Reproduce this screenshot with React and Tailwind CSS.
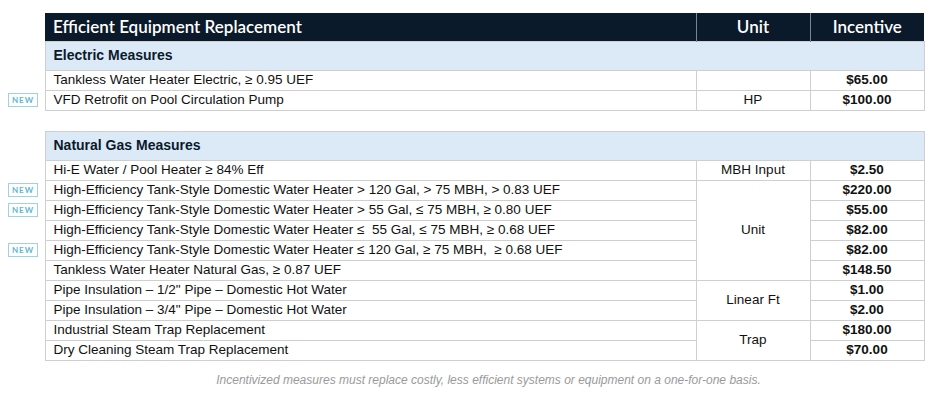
import React from "react";

const New = () => (
  <span className="block w-[30px] h-[14px] border border-[#9fd3e0] text-[#5bb8cf] text-[8px] leading-[12px] text-center tracking-[1px] font-bold" style={{ fontFamily: "Lato, sans-serif" }}>
    NEW
  </span>
);

const td = "border border-[#cfcfcf] h-[20px] px-[8px] py-0 text-[13.5px] leading-[18px] text-[#111] whitespace-pre overflow-hidden";

export default function App() {
  const electric = [
    { d: "Tankless Water Heater Electric, ≥ 0.95 UEF", u: "", i: "$65.00" },
    { d: "VFD Retrofit on Pool Circulation Pump", u: "HP", i: "$100.00", n: true },
  ];
  const gas = [
    { d: "Hi-E Water / Pool Heater ≥ 84% Eff", u: "MBH Input", span: 1, i: "$2.50" },
    { d: "High-Efficiency Tank-Style Domestic Water Heater > 120 Gal, > 75 MBH, > 0.83 UEF", u: "Unit", span: 5, i: "$220.00", n: true },
    { d: "High-Efficiency Tank-Style Domestic Water Heater > 55 Gal, ≤ 75 MBH, ≥ 0.80 UEF", i: "$55.00", n: true },
    { d: "High-Efficiency Tank-Style Domestic Water Heater ≤  55 Gal, ≤ 75 MBH, ≥ 0.68 UEF", i: "$82.00" },
    { d: "High-Efficiency Tank-Style Domestic Water Heater ≤ 120 Gal, ≥ 75 MBH,  ≥ 0.68 UEF", i: "$82.00", n: true },
    { d: "Tankless Water Heater Natural Gas, ≥ 0.87 UEF", i: "$148.50" },
    { d: "Pipe Insulation – 1/2\" Pipe – Domestic Hot Water", u: "Linear Ft", span: 2, i: "$1.00" },
    { d: "Pipe Insulation – 3/4\" Pipe – Domestic Hot Water", i: "$2.00" },
    { d: "Industrial Steam Trap Replacement", u: "Trap", span: 2, i: "$180.00" },
    { d: "Dry Cleaning Steam Trap Replacement", i: "$70.00" },
  ];

  const row = (r, k) => (
    <tr key={k} className="h-[20px]">
      <td className="w-[45px] p-0 pl-[8px] h-[20px] leading-none align-middle">{r.n && <New />}</td>
      <td className={td}>{r.d}</td>
      {r.span !== undefined ? (
        <td rowSpan={r.span} className={td + " text-center"}>{r.u}</td>
      ) : null}
      <td className={td + " text-center font-bold"}>{r.i}</td>
    </tr>
  );

  const section = (t) => (
    <tr>
      <td className="p-0" />
      <td colSpan={3} className="bg-[#dce9f6] border border-[#cfcfcf] h-[29px] px-[8px] text-[14px] font-bold text-[#0b1a2a]">
        {t}
      </td>
    </tr>
  );

  const head = "bg-[#0b1a2a] text-white text-[17px] font-semibold";

  return (
    <div className="w-[932px] h-[401px] bg-white pt-[13px]" style={{ fontFamily: '"Liberation Sans", Arial, sans-serif' }}>
      <table className="border-collapse w-[924px] table-fixed">
        <colgroup>
          <col className="w-[45px]" />
          <col className="w-[651px]" />
          <col className="w-[114px]" />
          <col className="w-[114px]" />
        </colgroup>
        <tbody>
          <tr>
            <td className="p-0" />
            <td className={head + " h-[28px] px-[8px] border-r border-[#7a8590]"} style={{ fontFamily: "Lato, sans-serif" }}>
              Efficient Equipment Replacement
            </td>
            <td className={head + " text-center border-r border-[#7a8590]"} style={{ fontFamily: "Lato, sans-serif" }}>Unit</td>
            <td className={head + " text-center"} style={{ fontFamily: "Lato, sans-serif" }}>Incentive</td>
          </tr>
          {section("Electric Measures")}
          {electric.map((r, k) => row({ ...r, span: 1 }, k))}
          <tr><td colSpan={4} className="h-[21px] p-0" /></tr>
          {section("Natural Gas Measures")}
          {gas.map((r, k) => row(r, k))}
        </tbody>
      </table>
      <p className="mt-[10px] pl-[45px] text-center text-[12px] italic text-[#9a9a9a]">
        Incentivized measures must replace costly, less efficient systems or equipment on a one-for-one basis.
      </p>
    </div>
  );
}
